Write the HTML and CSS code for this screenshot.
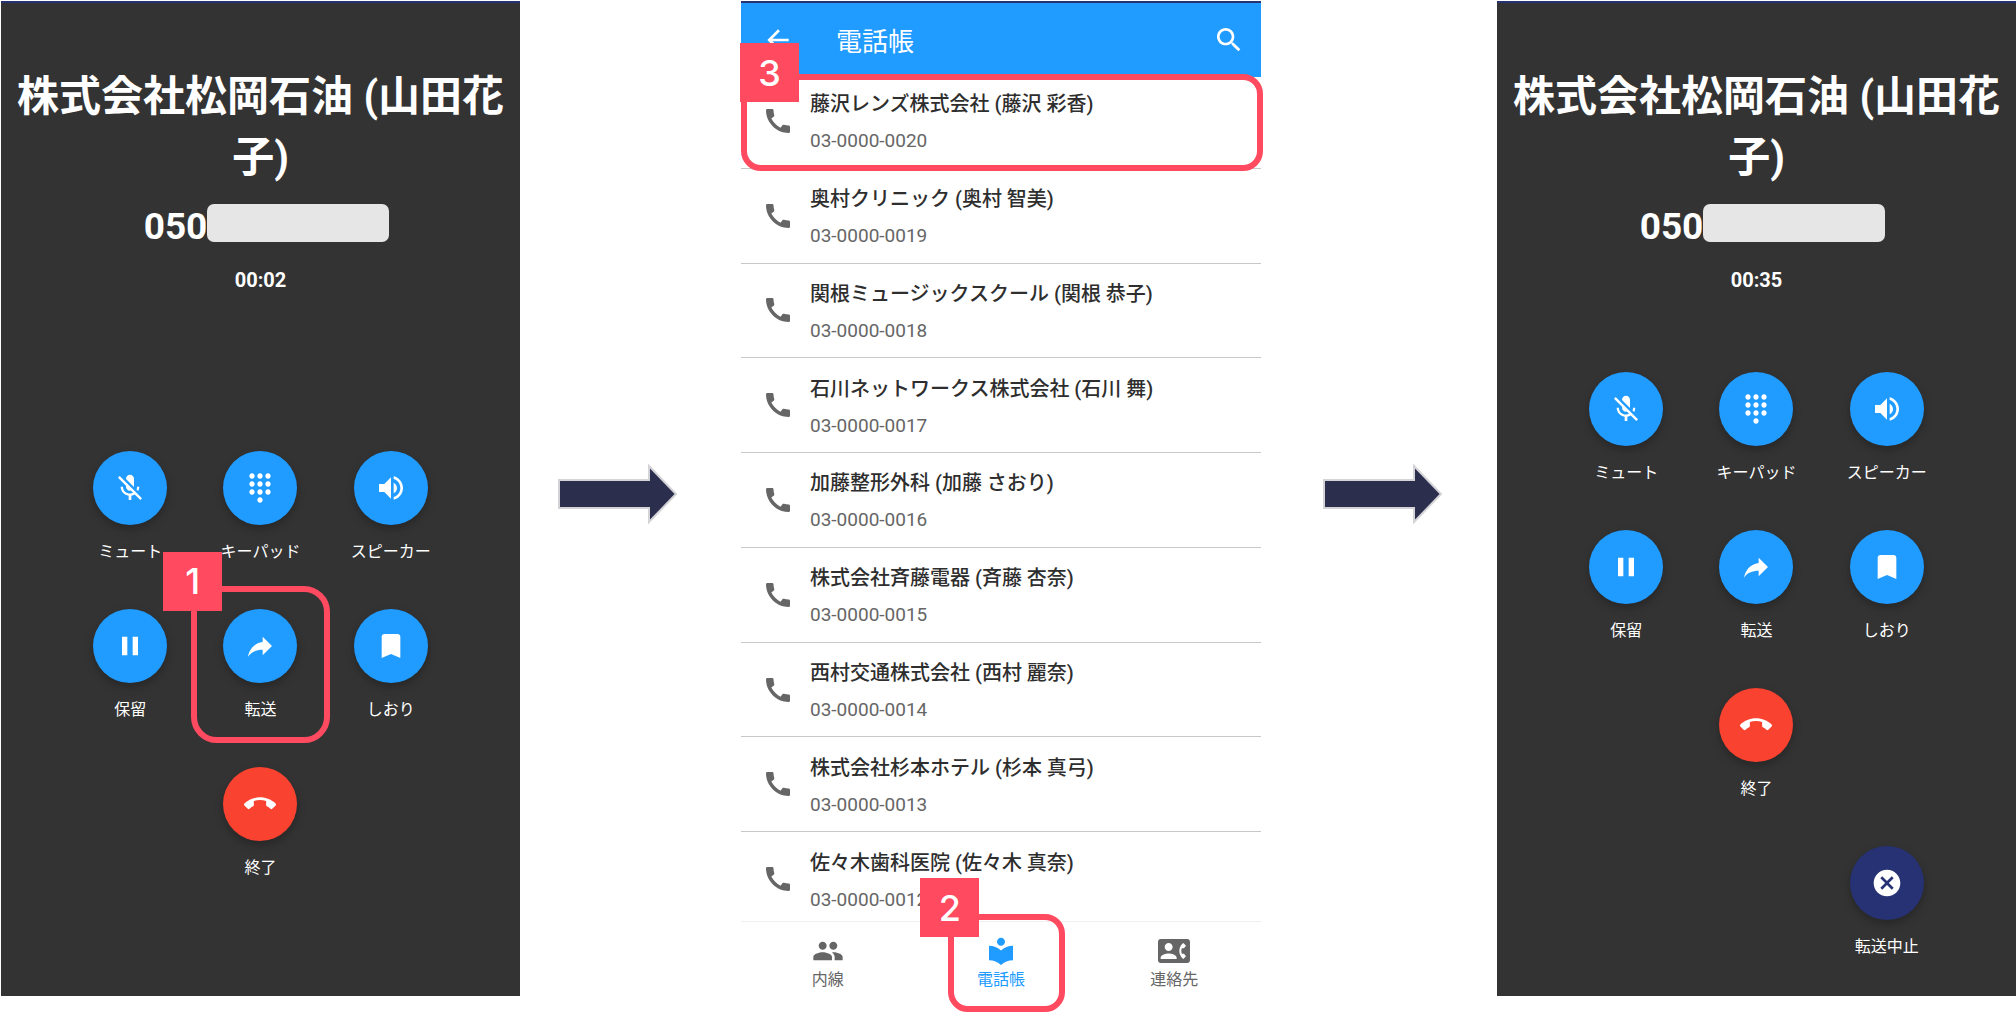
FILE: index.html
```html
<!DOCTYPE html>
<html lang="ja">
<head>
<meta charset="utf-8">
<meta name="viewport" content="width=device-width, initial-scale=1">
<title>通話の転送手順</title>
<link rel="stylesheet" href="styles.css">
</head>
<body>
<svg class="sprite" aria-hidden="true">
  <symbol id="mic-off" viewBox="0 0 24 24"><path d="M19 11h-1.7c0 .74-.16 1.43-.43 2.05l1.23 1.23c.56-.98.9-2.09.9-3.28zm-4.02.17c0-.06.02-.11.02-.17V5c0-1.66-1.34-3-3-3S9 3.34 9 5v.18l5.98 5.99zM4.27 3L3 4.27l6.01 6.01V11c0 1.66 1.33 3 2.99 3 .22 0 .44-.03.65-.08l1.66 1.66c-.71.33-1.5.52-2.31.52-2.76 0-5.3-2.1-5.3-5.1H5c0 3.41 2.72 6.23 6 6.72V21h2v-3.28c.91-.13 1.77-.45 2.54-.9L19.73 21 21 19.73 4.27 3z"/></symbol>
  <symbol id="dialpad" viewBox="0 0 24 24"><path d="M12 19c-1.1 0-2 .9-2 2s.9 2 2 2 2-.9 2-2-.9-2-2-2zM6 1c-1.1 0-2 .9-2 2s.9 2 2 2 2-.9 2-2-.9-2-2-2zm0 6c-1.1 0-2 .9-2 2s.9 2 2 2 2-.9 2-2-.9-2-2-2zm0 6c-1.1 0-2 .9-2 2s.9 2 2 2 2-.9 2-2-.9-2-2-2zm12-8c1.1 0 2-.9 2-2s-.9-2-2-2-2 .9-2 2 .9 2 2 2zm-6 8c-1.1 0-2 .9-2 2s.9 2 2 2 2-.9 2-2-.9-2-2-2zm6 0c-1.1 0-2 .9-2 2s.9 2 2 2 2-.9 2-2-.9-2-2-2zm0-6c-1.1 0-2 .9-2 2s.9 2 2 2 2-.9 2-2-.9-2-2-2zm-6 0c-1.1 0-2 .9-2 2s.9 2 2 2 2-.9 2-2-.9-2-2-2zm0-6c-1.1 0-2 .9-2 2s.9 2 2 2 2-.9 2-2-.9-2-2-2z"/></symbol>
  <symbol id="volume" viewBox="0 0 24 24"><path d="M3 9v6h4l5 5V4L7 9H3zm13.500 3c0-1.770-1.020-3.290-2.500-4.030v8.050c1.480-.730 2.500-2.250 2.500-4.020zM14 3.230v2.060c2.890.860 5 3.540 5 6.710s-2.110 5.850-5 6.710v2.060c4.010-.910 7-4.490 7-8.770s-2.990-7.860-7-8.770z"/></symbol>
  <symbol id="pause" viewBox="0 0 24 24"><path d="M6 19h4V5H6v14zm8-14v14h4V5h-4z"/></symbol>
  <symbol id="forward" viewBox="0 0 24 24"><path d="M14 9V5l7 7-7 7v-4.100c-5 0-8.500 1.600-11 5.100 1-5 4-10 11-11z"/></symbol>
  <symbol id="bookmark" viewBox="0 0 24 24"><path d="M17 3H7c-1.100 0-1.990.900-1.990 2L5 21l7-3 7 3V5c0-1.100-.900-2-2-2z"/></symbol>
  <symbol id="call-end" viewBox="0 0 24 24"><path d="M12 9c-1.600 0-3.150.250-4.600.720v3.100c0 .390-.230.740-.560.900-.980.490-1.870 1.120-2.660 1.850-.180.180-.430.280-.700.280-.280 0-.530-.110-.710-.290L.290 13.080c-.180-.170-.290-.420-.290-.700 0-.280.110-.530.290-.710C3.340 8.780 7.460 7 12 7s8.660 1.780 11.710 4.670c.180.180.290.430.290.710 0 .280-.110.530-.290.710l-2.480 2.480c-.180.180-.430.290-.710.290-.270 0-.520-.110-.700-.280-.790-.740-1.690-1.360-2.670-1.850-.330-.160-.560-.500-.560-.900v-3.100C15.150 9.250 13.600 9 12 9z"/></symbol>
  <symbol id="cancel" viewBox="0 0 24 24"><path d="M12 2C6.470 2 2 6.470 2 12s4.470 10 10 10 10-4.470 10-10S17.530 2 12 2zm5 13.590L15.590 17 12 13.410 8.410 17 7 15.590 10.590 12 7 8.410 8.410 7 12 10.590 15.590 7 17 8.410 13.410 12 17 15.590z"/></symbol>
  <symbol id="back" viewBox="0 0 24 24"><path d="M20 11H7.830l5.590-5.590L12 4l-8 8 8 8 1.410-1.410L7.830 13H20v-2z"/></symbol>
  <symbol id="search" viewBox="0 0 24 24"><path d="M15.500 14h-.790l-.280-.270C15.410 12.590 16 11.110 16 9.500 16 5.910 13.090 3 9.500 3S3 5.910 3 9.500 5.910 16 9.500 16c1.610 0 3.090-.590 4.230-1.570l.270.280v.790l5 4.990L20.490 19l-4.990-5zm-6 0C7.010 14 5 11.990 5 9.500S7.010 5 9.500 5 14 7.010 14 9.500 11.990 14 9.500 14z"/></symbol>
  <symbol id="phone" viewBox="0 0 24 24"><path d="M20.010 15.380c-1.230 0-2.420-.200-3.530-.560-.350-.120-.740-.030-1.010.240l-1.570 1.970c-2.830-1.350-5.480-3.900-6.890-6.830l1.950-1.660c.270-.280.350-.670.240-1.020-.370-1.110-.560-2.300-.560-3.530 0-.540-.450-.990-.990-.990H4.190C3.650 3 3 3.240 3 3.990 3 13.280 10.730 21 20.010 21c.710 0 .990-.630.990-1.180v-3.450c0-.540-.450-.990-.990-.990z"/></symbol>
  <symbol id="people" viewBox="0 0 24 24"><path d="M16 11c1.660 0 2.990-1.340 2.990-3S17.660 5 16 5c-1.660 0-3 1.340-3 3s1.340 3 3 3zm-8 0c1.660 0 2.990-1.340 2.990-3S9.660 5 8 5C6.340 5 5 6.340 5 8s1.340 3 3 3zm0 2c-2.330 0-7 1.170-7 3.500V19h14v-2.500c0-2.330-4.670-3.500-7-3.500zm8 0c-.290 0-.620.020-.970.050 1.160.840 1.970 1.970 1.970 3.450V19h6v-2.500c0-2.330-4.670-3.500-7-3.500z"/></symbol>
  <symbol id="directory" viewBox="0 0 24 24"><path d="M12 11.550C9.640 9.350 6.480 8 3 8v11c3.480 0 6.640 1.350 9 3.550 2.360-2.190 5.520-3.550 9-3.550V8c-3.480 0-6.640 1.350-9 3.550zM12 8c1.660 0 3-1.340 3-3s-1.340-3-3-3-3 1.340-3 3 1.340 3 3 3z"/></symbol>
  <symbol id="contact" viewBox="0 0 24 24"><path d="M22 3H2C.900 3 0 3.900 0 5v14c0 1.100.900 2 2 2h20c1.100 0 1.990-.900 1.990-2L24 5c0-1.100-.900-2-2-2zM8 6c1.660 0 3 1.340 3 3s-1.340 3-3 3-3-1.340-3-3 1.340-3 3-3zm6 12H2v-1c0-2 4-3.100 6-3.100s6 1.100 6 3.100v1zm3.850-4h1.640L21 16l-1.990 1.990c-1.310-.980-2.280-2.380-2.730-3.990-.180-.640-.280-1.310-.280-2s.100-1.360.280-2c.450-1.620 1.420-3.010 2.730-3.990L21 8l-1.510 2h-1.640c-.220.630-.350 1.300-.350 2s.130 1.370.350 2z"/></symbol>
  <symbol id="arrow" viewBox="0 0 120 62"><path d="M1 17H91V3L118 31 91 59V45H1z" fill="#2c2e4e" stroke="#d4d4d8" stroke-width="2"/></symbol>
</svg>

<main class="flow">
  <section class="phone call" aria-label="通話中">
    <header class="caller">
      <h1 class="caller-name">株式会社松岡石油 (山田花子)</h1>
      <p class="caller-number">050<span class="redacted"></span></p>
      <p class="timer">00:02</p>
    </header>
    <ul class="actions">
      <li class="action"><button type="button" class="round" aria-labelledby="a1"><svg class="icon"><use href="#mic-off"/></svg></button><span class="label" id="a1">ミュート</span></li>
      <li class="action"><button type="button" class="round" aria-labelledby="a2"><svg class="icon"><use href="#dialpad"/></svg></button><span class="label" id="a2">キーパッド</span></li>
      <li class="action"><button type="button" class="round" aria-labelledby="a3"><svg class="icon"><use href="#volume"/></svg></button><span class="label" id="a3">スピーカー</span></li>
      <li class="action"><button type="button" class="round" aria-labelledby="a4"><svg class="icon"><use href="#pause"/></svg></button><span class="label" id="a4">保留</span></li>
      <li class="action marked"><button type="button" class="round" aria-labelledby="a5"><svg class="icon"><use href="#forward"/></svg></button><span class="label" id="a5">転送</span><div class="callout callout-action"><span class="step">1</span></div></li>
      <li class="action"><button type="button" class="round" aria-labelledby="a6"><svg class="icon"><use href="#bookmark"/></svg></button><span class="label" id="a6">しおり</span></li>
      <li class="action end"><button type="button" class="round hangup" aria-labelledby="a7"><svg class="icon"><use href="#call-end"/></svg></button><span class="label" id="a7">終了</span></li>
    </ul>
  </section>

  <svg class="arrow" aria-hidden="true"><use href="#arrow"/></svg>

  <section class="phone book" aria-label="電話帳">
    <header class="bar">
      <button type="button" class="bar-button" aria-label="戻る"><svg class="icon"><use href="#back"/></svg></button>
      <h2 class="bar-title">電話帳</h2>
      <button type="button" class="bar-button" aria-label="検索"><svg class="icon"><use href="#search"/></svg></button>
    </header>
    <ul class="contacts">
      <li class="contact marked"><svg class="icon"><use href="#phone"/></svg><a class="entry" href="#"><span class="name">藤沢レンズ株式会社 (藤沢 彩香)</span><span class="number">03-0000-0020</span></a><div class="callout callout-contact"><span class="step">3</span></div></li>
      <li class="contact"><svg class="icon"><use href="#phone"/></svg><a class="entry" href="#"><span class="name">奥村クリニック (奥村 智美)</span><span class="number">03-0000-0019</span></a></li>
      <li class="contact"><svg class="icon"><use href="#phone"/></svg><a class="entry" href="#"><span class="name">関根ミュージックスクール (関根 恭子)</span><span class="number">03-0000-0018</span></a></li>
      <li class="contact"><svg class="icon"><use href="#phone"/></svg><a class="entry" href="#"><span class="name">石川ネットワークス株式会社 (石川 舞)</span><span class="number">03-0000-0017</span></a></li>
      <li class="contact"><svg class="icon"><use href="#phone"/></svg><a class="entry" href="#"><span class="name">加藤整形外科 (加藤 さおり)</span><span class="number">03-0000-0016</span></a></li>
      <li class="contact"><svg class="icon"><use href="#phone"/></svg><a class="entry" href="#"><span class="name">株式会社斉藤電器 (斉藤 杏奈)</span><span class="number">03-0000-0015</span></a></li>
      <li class="contact"><svg class="icon"><use href="#phone"/></svg><a class="entry" href="#"><span class="name">西村交通株式会社 (西村 麗奈)</span><span class="number">03-0000-0014</span></a></li>
      <li class="contact"><svg class="icon"><use href="#phone"/></svg><a class="entry" href="#"><span class="name">株式会社杉本ホテル (杉本 真弓)</span><span class="number">03-0000-0013</span></a></li>
      <li class="contact"><svg class="icon"><use href="#phone"/></svg><a class="entry" href="#"><span class="name">佐々木歯科医院 (佐々木 真奈)</span><span class="number">03-0000-0012</span></a></li>
    </ul>
    <nav class="tabs">
      <div class="tab-slot"><a class="tab" href="#"><svg class="icon"><use href="#people"/></svg>内線</a></div>
      <div class="tab-slot marked"><a class="tab current" href="#" aria-current="page"><svg class="icon"><use href="#directory"/></svg>電話帳</a><div class="callout callout-tab"><span class="step">2</span></div></div>
      <div class="tab-slot"><a class="tab" href="#"><svg class="icon"><use href="#contact"/></svg>連絡先</a></div>
    </nav>
  </section>

  <svg class="arrow" aria-hidden="true"><use href="#arrow"/></svg>

  <section class="phone call" aria-label="転送中">
    <header class="caller">
      <h1 class="caller-name">株式会社松岡石油 (山田花子)</h1>
      <p class="caller-number">050<span class="redacted"></span></p>
      <p class="timer">00:35</p>
    </header>
    <ul class="actions">
      <li class="action"><button type="button" class="round" aria-labelledby="b1"><svg class="icon"><use href="#mic-off"/></svg></button><span class="label" id="b1">ミュート</span></li>
      <li class="action"><button type="button" class="round" aria-labelledby="b2"><svg class="icon"><use href="#dialpad"/></svg></button><span class="label" id="b2">キーパッド</span></li>
      <li class="action"><button type="button" class="round" aria-labelledby="b3"><svg class="icon"><use href="#volume"/></svg></button><span class="label" id="b3">スピーカー</span></li>
      <li class="action"><button type="button" class="round" aria-labelledby="b4"><svg class="icon"><use href="#pause"/></svg></button><span class="label" id="b4">保留</span></li>
      <li class="action"><button type="button" class="round" aria-labelledby="b5"><svg class="icon"><use href="#forward"/></svg></button><span class="label" id="b5">転送</span></li>
      <li class="action"><button type="button" class="round" aria-labelledby="b6"><svg class="icon"><use href="#bookmark"/></svg></button><span class="label" id="b6">しおり</span></li>
      <li class="action end"><button type="button" class="round hangup" aria-labelledby="b7"><svg class="icon"><use href="#call-end"/></svg></button><span class="label" id="b7">終了</span></li>
      <li class="action stop"><button type="button" class="round abort" aria-labelledby="b8"><svg class="icon"><use href="#cancel"/></svg></button><span class="label" id="b8">転送中止</span></li>
    </ul>
  </section>
</main>
</body>
</html>
```
FILE: styles.css
```css
* {
  box-sizing: border-box;
}

body {
  margin: 0;
  background: #fff;
  font-family: Roboto, "Noto Sans CJK JP", sans-serif;
}

h1, h2, p, ul {
  margin: 0;
  padding: 0;
}

ul {
  list-style: none;
}

a {
  color: inherit;
  text-decoration: none;
}

button {
  padding: 0;
  border: 0;
  background: none;
  color: inherit;
  font: inherit;
  cursor: pointer;
}

.sprite {
  display: none;
}

.icon {
  display: block;
  flex: none;
  width: 32px;
  height: 32px;
  fill: currentColor;
}

/* three screens joined by arrows */
.flow {
  display: grid;
  grid-template-columns: 519fr 221fr 520fr 236fr 519fr;
  min-height: 100vh;
  padding: 1px 0 16px 1px;
}

.phone {
  display: flex;
  flex-direction: column;
  min-width: 0;
  border-top: 2px solid #263273;
}

.arrow {
  align-self: center;
  justify-self: center;
  width: 120px;
  height: 62px;
  margin: 0 0 9px 8px;
}

.call + .arrow {
  margin: 0 26px 9px 0;
}

/* call screen */
.call {
  background: #333;
  color: #fff;
}

.caller {
  padding: 63px 8px 0;
  text-align: center;
}

.caller-name {
  font-size: 42px;
  font-weight: 700;
  line-height: 61px;
}

.caller-number {
  display: flex;
  align-items: flex-start;
  justify-content: center;
  margin-top: 16px;
  padding-left: 12px;
  font-size: 37px;
  font-weight: 700;
  line-height: 46px;
}

.redacted {
  width: 182px;
  height: 38px;
  border-radius: 7px;
  background: #e6e6e6;
}

.timer {
  margin-top: 16px;
  font-size: 20px;
  font-weight: 700;
  line-height: 28px;
}

.actions {
  display: grid;
  flex: 1;
  grid-template-columns: repeat(3, 1fr);
  align-content: center;
  row-gap: 45px;
  padding: 40px 64px 0;
}

.action {
  display: flex;
  flex-direction: column;
  align-items: center;
  gap: 15px;
}

.end {
  grid-area: 3 / 2;
}

.stop {
  grid-area: 4 / 3;
}

.round {
  display: grid;
  place-items: center;
  width: 74px;
  height: 74px;
  border-radius: 50%;
  background: #209bff;
  box-shadow: 0 4px 8px rgba(0, 0, 0, 0.25);
}

.hangup {
  background: #fa4230;
}

.abort {
  background: #263273;
}

.label {
  font-size: 16px;
  line-height: 24px;
  white-space: nowrap;
}

/* phone book screen */
.bar {
  display: flex;
  align-items: center;
  height: 74px;
  padding: 0 16px 0 21px;
  background: #209bff;
  color: #fff;
}

.bar-title {
  flex: 1;
  margin: 4px 0 0 42px;
  font-size: 26px;
  font-weight: 400;
  line-height: 38px;
}

/* the list runs slightly under the bars above and below it */
.contacts {
  display: grid;
  flex: 1;
  grid-auto-rows: 1fr;
  margin: -3px 0 -6px;
}

.contact {
  display: flex;
  align-items: center;
  gap: 16px;
  padding: 0 16px 0 21px;
  border-bottom: 1px solid #c8c8c8;
  color: #666;
}

.entry {
  display: flex;
  flex-direction: column;
  gap: 8px;
  padding-top: 3px;
}

.name {
  color: #2e2e2e;
  font-size: 20px;
  font-weight: 500;
  line-height: 30px;
}

.number {
  font-size: 19px;
  line-height: 28px;
}

.tabs {
  display: grid;
  grid-template-columns: repeat(3, 1fr);
  height: 75px;
  border-top: 1px solid #f0f0f0;
  background: #fff;
}

.tab {
  display: flex;
  flex-direction: column;
  align-items: center;
  padding-top: 13px;
  color: #666;
  font-size: 16px;
  line-height: 26px;
}

.current {
  color: #209bff;
}

/* numbered step markers */
.marked {
  position: relative;
}

.callout {
  position: absolute;
  border: 6px solid #ff4a60;
  border-radius: 20px;
  pointer-events: none;
}

.step {
  position: absolute;
  display: grid;
  place-items: center;
  width: 59px;
  height: 59px;
  background: #ff4a60;
  color: #fff;
  font-family: Inter, sans-serif;
  font-size: 36px;
  font-weight: 500;
  line-height: 44px;
}

.callout-action {
  inset: -23px -4px -21px;
  border-radius: 26px;
}

.callout-action .step {
  top: -40px;
  left: -34px;
}

.callout-contact {
  inset: 0 -2px -3px 0;
}

.callout-contact .step {
  top: -37px;
  left: -7px;
}

.callout-tab {
  inset: -8px 23px -16px 34px;
}

.callout-tab .step {
  top: -42px;
  left: -34px;
}
```
